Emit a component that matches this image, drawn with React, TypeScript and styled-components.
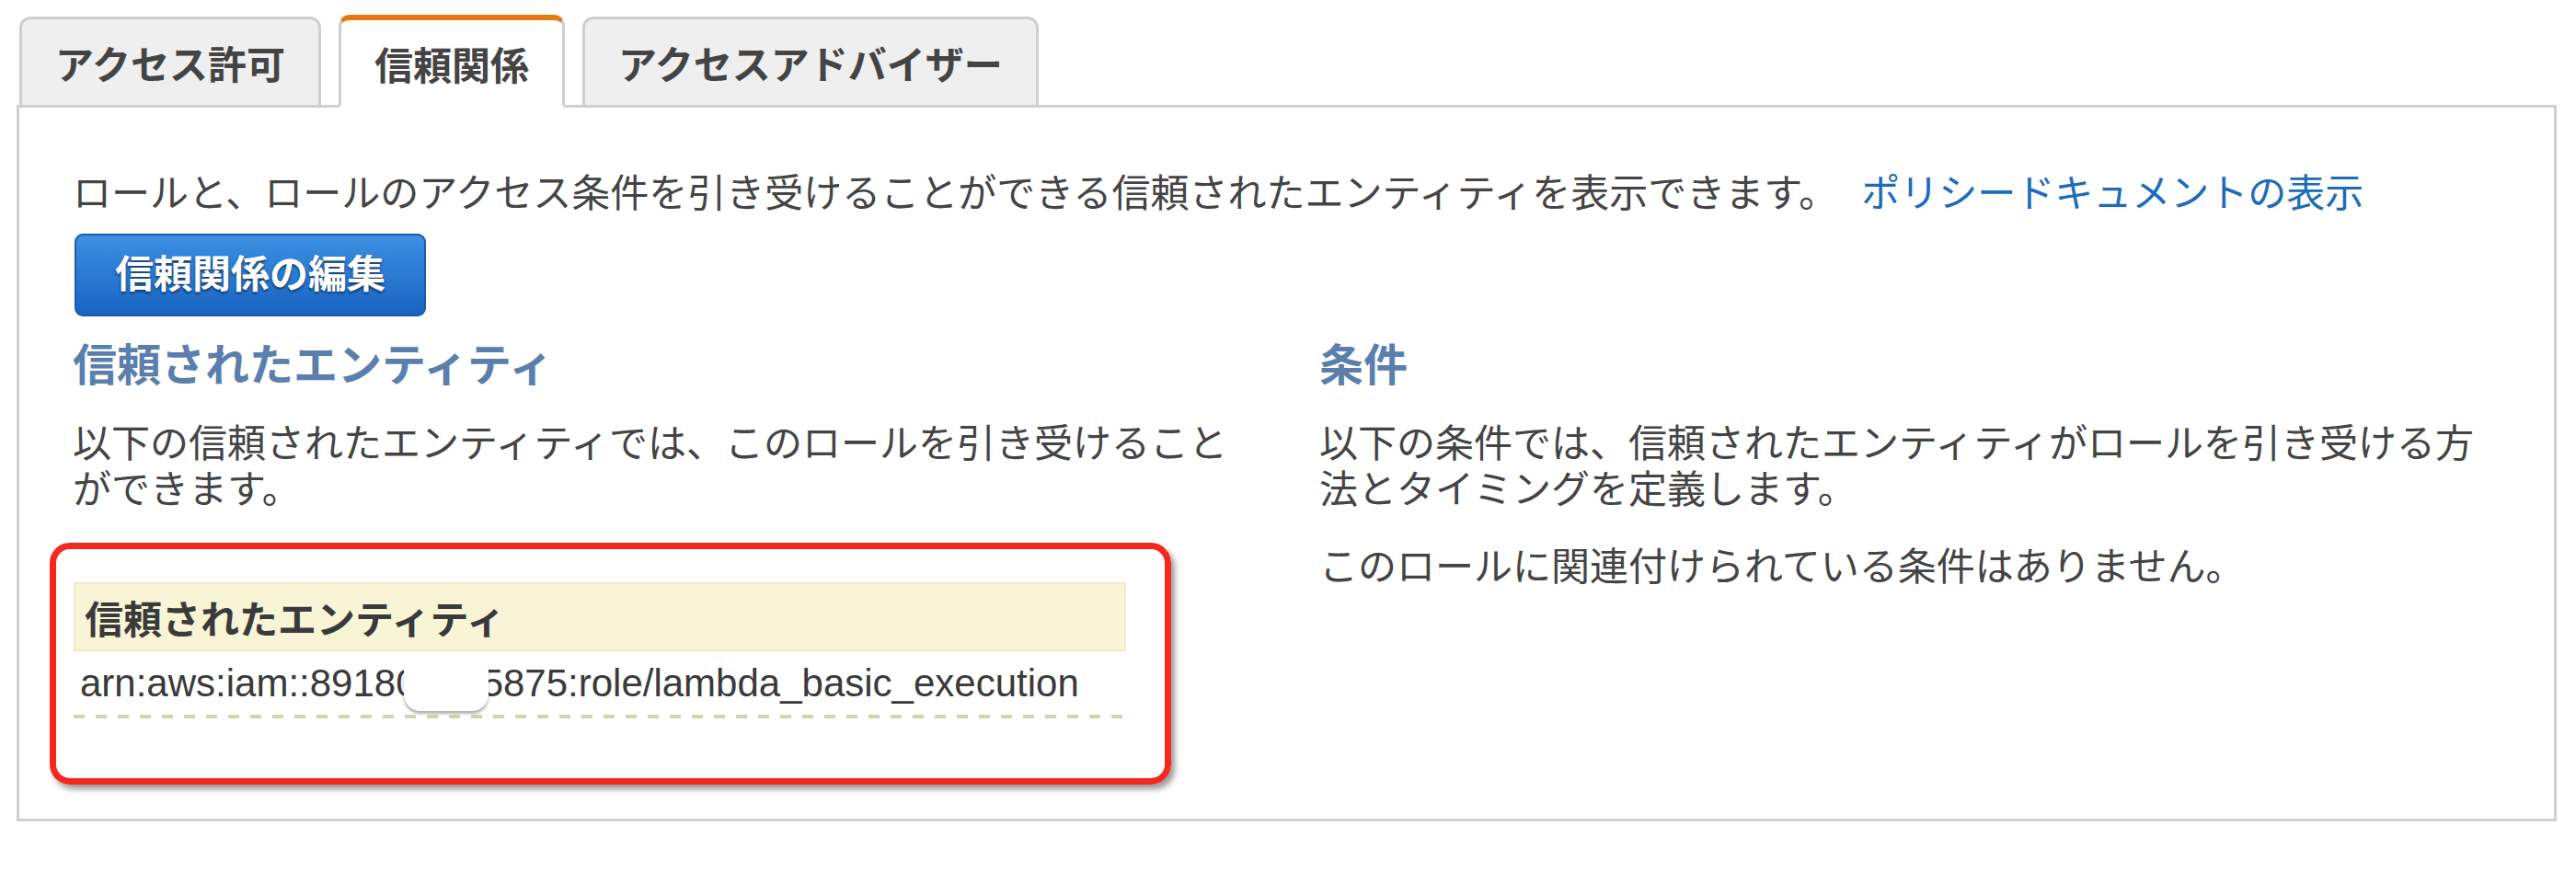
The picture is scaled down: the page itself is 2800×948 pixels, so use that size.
import React from 'react';
import styled, { createGlobalStyle } from 'styled-components';

const GlobalStyle = createGlobalStyle`
  html, body {
    margin: 0;
    padding: 0;
    background: #fff;
  }
  body {
    font-family: "Liberation Sans", "Noto Sans CJK JP", sans-serif;
    color: #444;
  }
`;

const Page = styled.div`
  width: 2800px;
  height: 948px;
  box-sizing: border-box;
  padding: 16px 0 0 18px;
`;

const TabBar = styled.div`
  display: flex;
  align-items: flex-end;
  gap: 19px;
  padding-left: 3px;
  margin-bottom: -3px;
  position: relative;
  z-index: 1;
`;

const Tab = styled.div<{ $active?: boolean }>`
  box-sizing: border-box;
  height: ${p => (p.$active ? 101 : 99)}px;
  padding: 0 36px;
  display: flex;
  align-items: center;
  justify-content: center;
  font-size: 42px;
  font-weight: 700;
  color: #444;
  background: ${p => (p.$active ? '#fff' : '#efefef')};
  border: 3px solid #cfcfcf;
  border-top: ${p => (p.$active ? '6px solid #e47911' : '3px solid #cfcfcf')};
  border-bottom: 3px solid ${p => (p.$active ? '#fff' : '#cfcfcf')};
  border-radius: 12px 12px 0 0;
`;

const Panel = styled.div`
  box-sizing: border-box;
  width: 2761px;
  height: 779px;
  border: 3px solid #cfcfcf;
  padding: 69px 58px 0 58px;
`;

const Intro = styled.p`
  margin: 0;
  font-size: 42px;
  line-height: 50px;
  white-space: nowrap;
`;

const Link = styled.a`
  margin-left: 26px;
  color: #1c6cb9;
  text-decoration: none;
`;

const EditButton = styled.button`
  display: block;
  margin: 18px 0 0 2px;
  width: 382px;
  height: 90px;
  padding: 0;
  border: 2px solid #1a5ca9;
  border-radius: 9px;
  background: linear-gradient(#3c90e3, #1964c2);
  color: #fff;
  font: 700 42px/1 "Liberation Sans", "Noto Sans CJK JP", sans-serif;
  text-shadow: 0 2px 3px rgba(0, 0, 0, 0.55);
`;

const Columns = styled.div`
  display: grid;
  grid-template-columns: 1282px 1fr;
  column-gap: 73px;
  margin-top: 25px;
`;

const Column = styled.div`
  display: flex;
  flex-direction: column;
  align-items: flex-start;
`;

const Heading = styled.h3`
  margin: 0;
  font-size: 48px;
  line-height: 58px;
  font-weight: 700;
  color: #5b7fad;
`;

const Para = styled.p<{ $gap?: number }>`
  margin: ${p => p.$gap ?? 31}px 0 0;
  font-size: 42px;
  line-height: 50px;
`;

const RedFrame = styled.div`
  box-sizing: border-box;
  margin: 32px 0 0 -25px;
  width: 1219px;
  border: 7px solid #f4291e;
  border-radius: 22px;
  box-shadow: 4px 5px 6px rgba(0, 0, 0, 0.4);
  padding: 36px 42px 65px 19px;
`;

const EntityHeader = styled.div`
  box-sizing: border-box;
  height: 75px;
  display: flex;
  align-items: center;
  padding-left: 10px;
  background: #f8f5d7;
  border: 2px solid #eeebc8;
  font-size: 42px;
  font-weight: 700;
  color: #3a3a3a;
`;

const ArnRow = styled.div`
  height: 69px;
  display: flex;
  align-items: center;
  padding-left: 7px;
  font-family: "Liberation Sans", sans-serif;
  font-size: 42px;
  color: #3a3a3a;
  white-space: nowrap;
`;

const Masked = styled.span`
  position: relative;

  &::after {
    content: "";
    position: absolute;
    left: 9px;
    right: -7px;
    top: 1px;
    bottom: -6px;
    background: #fff;
    border-radius: 8px 8px 18px 18px;
    box-shadow: 0 3px 3px rgba(0, 0, 0, 0.3);
  }
`;

const DashLine = styled.div`
  height: 4px;
  background: repeating-linear-gradient(to right, #d4d4ab 0 12px, transparent 12px 24px);
`;

export default function App() {
  return (
    <Page>
      <GlobalStyle />
      <TabBar>
        <Tab>アクセス許可</Tab>
        <Tab $active>信頼関係</Tab>
        <Tab>アクセスアドバイザー</Tab>
      </TabBar>
      <Panel>
        <Intro>
          ロールと、ロールのアクセス条件を引き受けることができる信頼されたエンティティを表示できます。
          <Link href="#">ポリシードキュメントの表示</Link>
        </Intro>
        <EditButton>信頼関係の編集</EditButton>
        <Columns>
          <Column>
            <Heading>信頼されたエンティティ</Heading>
            <Para>以下の信頼されたエンティティでは、このロールを引き受けることができます。</Para>
            <RedFrame>
              <EntityHeader>信頼されたエンティティ</EntityHeader>
              <ArnRow>
                arn:aws:iam::8918<Masked>0000</Masked>5875:role/lambda_basic_execution
              </ArnRow>
              <DashLine />
            </RedFrame>
          </Column>
          <Column>
            <Heading>条件</Heading>
            <Para>以下の条件では、信頼されたエンティティがロールを引き受ける方法とタイミングを定義します。</Para>
            <Para $gap={34}>このロールに関連付けられている条件はありません。</Para>
          </Column>
        </Columns>
      </Panel>
    </Page>
  );
}
